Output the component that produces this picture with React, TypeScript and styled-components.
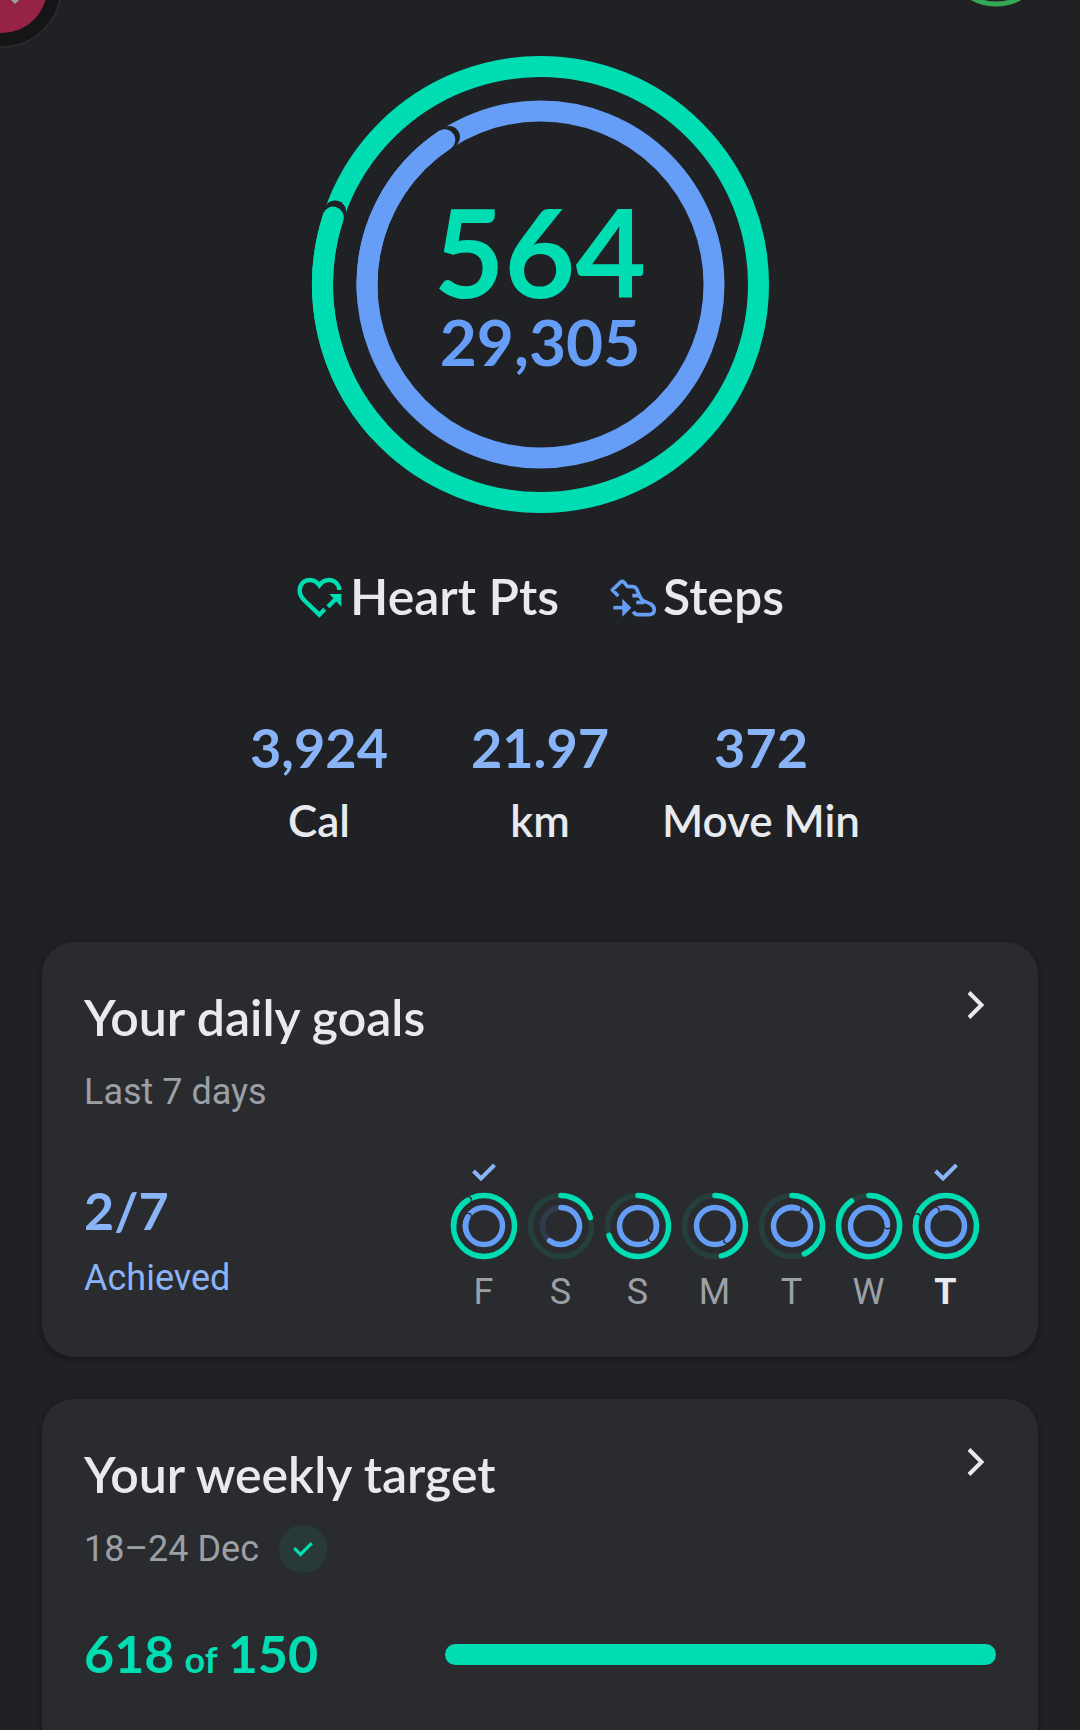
import React from "react";
import styled, { createGlobalStyle } from "styled-components";

const color = {
  page: "#202124",
  card: "#2a2b2e",
  green: "#00ddb3",
  blue: "#669df6",
  lightBlue: "#8ab4f8",
  text: "#e8eaed",
  muted: "#9aa0a6",
  greenTrack: "#25403c",
  blueTrack: "#323b4c",
  badge: "#283a38",
};

const display = `Lato, "Open Sans", sans-serif`;
const body = `Roboto, "Noto Sans", sans-serif`;

const GlobalStyle = createGlobalStyle`
  * { box-sizing: border-box; }
  body { margin: 0; background: ${color.page}; color: ${color.text}; font-family: ${body}; }
  h2, p, dl, dt, dd, ul { margin: 0; padding: 0; }
`;

const Page = styled.div`
  min-height: 100vh;
  display: flex;
  flex-direction: column;
  background: ${color.page};
`;

const TopBar = styled.header`
  display: flex;
  justify-content: space-between;
  align-items: flex-start;
  height: 56px;
  padding-right: 54px;
`;

const Icon = styled.svg`
  display: block;
  flex: none;
`;

const Summary = styled.section`
  display: flex;
  flex-direction: column;
  align-items: center;
`;

const Dial = styled.div`
  display: grid;
  place-items: center;
  > * { grid-area: 1 / 1; }
`;

const DialText = styled.div`
  display: flex;
  flex-direction: column;
  align-items: center;
  padding-top: 14px;
  font-family: ${display};
  font-weight: 700;
`;

const HeartPoints = styled.div`
  font-size: 122px;
  line-height: 100px;
  color: ${color.green};
`;

const StepCount = styled.div`
  font-size: 64px;
  line-height: 82px;
  color: ${color.blue};
`;

const Legend = styled.ul`
  display: flex;
  gap: 50px;
  margin-top: 55px;
  list-style: none;
`;

const LegendItem = styled.li`
  display: flex;
  align-items: center;
  gap: 6px;
  font: 600 50px/56px ${display};
`;

const Stats = styled.dl`
  display: grid;
  grid-template-columns: repeat(3, 221px);
  margin-top: 92px;
  text-align: center;
`;

const Stat = styled.div`
  display: flex;
  flex-direction: column-reverse;
`;

const StatLabel = styled.dt`
  font: 600 44px/80px ${display};
`;

const StatValue = styled.dd`
  font: 700 54px/64px ${display};
  color: ${color.lightBlue};
`;

const Cards = styled.main`
  flex: 1;
  display: flex;
  flex-direction: column;
  gap: 42px;
  padding: 82px 42px 0;
`;

const Card = styled.section<{ $open?: boolean }>`
  flex: ${(p) => (p.$open ? "1 0 auto" : "none")};
  padding: 46px 42px 41px;
  border-radius: ${(p) => (p.$open ? "32px 32px 0 0" : "32px")};
  background: ${color.card};
  box-shadow: 0 2px 6px rgba(0, 0, 0, 0.35);
`;

const CardHead = styled.div`
  display: flex;
  justify-content: space-between;
  align-items: flex-start;
`;

const CardTitle = styled.h2`
  font: 600 50px/58px ${display};
`;

const MoreButton = styled.button`
  display: grid;
  place-items: center;
  width: 40px;
  height: 34px;
  padding: 0;
  border: 0;
  background: none;
  color: ${color.text};
  cursor: pointer;
`;

const Subtitle = styled.p`
  display: flex;
  align-items: center;
  gap: 20px;
  margin-top: 22px;
  font-size: 36px;
  line-height: 48px;
  color: ${color.muted};
`;

const Badge = styled.span`
  display: grid;
  place-items: center;
  width: 48px;
  height: 48px;
  border-radius: 50%;
  background: ${color.badge};
`;

const CardBody = styled.div`
  display: grid;
  grid-template-columns: 361px 1fr;
  align-items: center;
  min-height: 74px;
  margin-top: 44px;
`;

const Figure = styled.p<{ $tone: string }>`
  display: flex;
  align-items: baseline;
  gap: 10px;
  padding-top: 4px;
  font: 700 52px/64px ${display};
  color: ${(p) => p.$tone};
`;

const Of = styled.span`
  font-size: 36px;
`;

const Caption = styled.p`
  margin-top: 12px;
  font-size: 36px;
  line-height: 48px;
  color: ${color.lightBlue};
`;

const Week = styled.ul`
  display: grid;
  grid-template-columns: repeat(7, 1fr);
  padding-right: 12px;
  list-style: none;
`;

const Day = styled.li`
  display: flex;
  flex-direction: column;
  align-items: center;
`;

const CheckSlot = styled.span`
  height: 32px;
`;

const DayLabel = styled.span<{ $today: boolean }>`
  margin-top: 8px;
  font-size: 36px;
  line-height: 48px;
  font-weight: ${(p) => (p.$today ? 700 : 400)};
  color: ${(p) => (p.$today ? color.text : color.muted)};
`;

const Meter = styled.progress`
  display: block;
  width: 100%;
  height: 21px;
  border: 0;
  border-radius: 11px;
  overflow: hidden;
  appearance: none;
  background: ${color.greenTrack};
  &::-webkit-progress-bar { background: ${color.greenTrack}; }
  &::-webkit-progress-value { background: ${color.green}; }
  &::-moz-progress-bar { background: ${color.green}; }
`;

/* Point on a circle, with the angle in degrees clockwise from the top. */
const point = (c: number, r: number, deg: number) => {
  const a = (deg * Math.PI) / 180;
  return [c + r * Math.sin(a), c - r * Math.cos(a)];
};

const arc = (c: number, r: number, from: number, to: number) => {
  const [x1, y1] = point(c, r, from);
  const [x2, y2] = point(c, r, to);
  return `M${x1} ${y1}A${r} ${r} 0 ${to - from > 180 ? 1 : 0} 1 ${x2} ${y2}`;
};

type RingProps = {
  c: number;
  r: number;
  width: number;
  end: number;
  lapped?: boolean;
  tone: string;
  track: string;
  ground: string;
  gap: number;
};

/* A goal ring. Once lapped, the whole circle is filled and the end overlaps its start. */
function Ring({ c, r, width, end, lapped, tone, track, ground, gap }: RingProps) {
  if (!lapped) {
    return (
      <g fill="none" strokeWidth={width}>
        <circle cx={c} cy={c} r={r} stroke={track} />
        <path d={arc(c, r, 0, end)} stroke={tone} strokeLinecap="round" />
      </g>
    );
  }
  const [gx, gy] = point(c, r, end + (gap / r) * 57.3);
  return (
    <g fill="none">
      <circle cx={c} cy={c} r={r} stroke={tone} strokeWidth={width} />
      <circle cx={gx} cy={gy} r={width / 2 + 0.5} fill={ground} />
      <path d={arc(c, r, end - 60, end)} stroke={tone} strokeWidth={width} strokeLinecap="round" />
    </g>
  );
}

function Check({ size, tone }: { size: number; tone: string }) {
  return (
    <Icon width={size} height={size} viewBox="0 0 24 24" fill="none" stroke={tone} strokeWidth="4">
      <path d="M1.500 11 9 18.500 22.500 5" />
    </Icon>
  );
}

function HeartIcon() {
  return (
    <Icon width="48" height="44" viewBox="47 43 144 132" fill="none" stroke={color.green} strokeWidth="13">
      <path d="M133 149 117 165 74 124C62 112 58 104 58 93 58 75 71 61 88 61 100 61 110 67 117 77 124 67 134 61 146 61 163 61 177 75 177 91" />
      <path d="M143 141 170 114" />
      <path d="M147 103H183V141Z" fill={color.green} stroke="none" />
    </Icon>
  );
}

function ShoeIcon() {
  return (
    <Icon width="48" height="44" viewBox="992 43 144 132" fill="none" stroke={color.blue} strokeWidth="11" strokeLinejoin="round">
      <path d="M1020 109 1002 91 1026 68Q1032 62 1038 69L1047 80 1064 81Q1072 82 1075 88L1082 105Q1087 118 1094 123L1115 132Q1128 139 1128 150 1127 165 1112 165H1078Q1070 165 1065 156" />
      <path d="M1062 108H1082M1074 128H1098" />
      <path d="M1005 144H1036" />
      <path d="M1032 117V171L1059 144Z" fill={color.blue} stroke="none" />
    </Icon>
  );
}

function Chevron() {
  return (
    <Icon width="20" height="30" viewBox="0 0 20 30" fill="none" stroke="currentColor" strokeWidth="4">
      <path d="M3 2.500 15.500 15 3 27.500" />
    </Icon>
  );
}

type DayGoal = { name: string; pts: number; ptsLapped?: boolean; steps: number; stepsLapped?: boolean; done?: boolean };

const week: DayGoal[] = [
  { name: "F", pts: 328, ptsLapped: true, steps: 300, stepsLapped: true, done: true },
  { name: "S", pts: 74, steps: 218 },
  { name: "S", pts: 252, steps: 132, stepsLapped: true },
  { name: "M", pts: 168, steps: 139, stepsLapped: true },
  { name: "T", pts: 156, steps: 18, stepsLapped: true },
  { name: "W", pts: 325, steps: 88, stepsLapped: true },
  { name: "T", pts: 287, ptsLapped: true, steps: 326, stepsLapped: true, done: true },
];

const stats = [
  { value: "3,924", label: "Cal" },
  { value: "21.97", label: "km" },
  { value: "372", label: "Move Min" },
];

export default function App() {
  return (
    <Page>
      <GlobalStyle />
      <TopBar>
        <Icon width="64" height="52" viewBox="0 0 64 52">
          <circle cx="2" cy="-12" r="59" fill="#151517" stroke="#29292b" strokeWidth="2" />
          <circle cx="2" cy="-12" r="45" fill="#962246" />
          <path d="M11 0H19L15 4Z" fill="#9aa0a6" />
        </Icon>
        <Icon width="60" height="8" viewBox="0 0 60 8">
          <circle cx="30" cy="-45" r="49" fill="none" stroke="#34a853" strokeWidth="5" />
        </Icon>
      </TopBar>

      <Summary>
        <Dial>
          <Icon width="458" height="457" viewBox="-1 0 458 457">
            <Ring c={228.500} r={218} width={21} end={288} lapped tone={color.green} track={color.greenTrack} ground={color.page} gap={6} />
            <Ring c={228.500} r={173.500} width={21} end={326.500} lapped tone={color.blue} track={color.blueTrack} ground={color.page} gap={5} />
          </Icon>
          <DialText>
            <HeartPoints>564</HeartPoints>
            <StepCount>29,305</StepCount>
          </DialText>
        </Dial>
        <Legend>
          <LegendItem><HeartIcon />Heart Pts</LegendItem>
          <LegendItem><ShoeIcon />Steps</LegendItem>
        </Legend>
        <Stats>
          {stats.map((s) => (
            <Stat key={s.label}>
              <StatLabel>{s.label}</StatLabel>
              <StatValue>{s.value}</StatValue>
            </Stat>
          ))}
        </Stats>
      </Summary>

      <Cards>
        <Card>
          <CardHead>
            <CardTitle>Your daily goals</CardTitle>
            <MoreButton aria-label="Open daily goals"><Chevron /></MoreButton>
          </CardHead>
          <Subtitle>Last 7 days</Subtitle>
          <CardBody>
            <div>
              <Figure $tone={color.lightBlue}>2/7</Figure>
              <Caption>Achieved</Caption>
            </div>
            <Week>
              {week.map((d, i) => (
                <Day key={i}>
                  <CheckSlot>{d.done && <Check size={24} tone={color.lightBlue} />}</CheckSlot>
                  <Icon width="68" height="68" viewBox="0 0 68 68">
                    <Ring c={34} r={30.500} width={5.500} end={d.pts} lapped={d.ptsLapped} tone={color.green} track={color.greenTrack} ground={color.card} gap={1} />
                    <Ring c={34} r={18.500} width={5.500} end={d.steps} lapped={d.stepsLapped} tone={color.blue} track={color.blueTrack} ground={color.card} gap={1} />
                  </Icon>
                  <DayLabel $today={i === week.length - 1}>{d.name}</DayLabel>
                </Day>
              ))}
            </Week>
          </CardBody>
        </Card>

        <Card $open>
          <CardHead>
            <CardTitle>Your weekly target</CardTitle>
            <MoreButton aria-label="Open weekly target"><Chevron /></MoreButton>
          </CardHead>
          <Subtitle>
            18–24 Dec
            <Badge><Check size={20} tone={color.green} /></Badge>
          </Subtitle>
          <CardBody>
            <Figure $tone={color.green}>618 <Of>of</Of> 150</Figure>
            <Meter aria-label="Weekly heart points" max={150} value={150} />
          </CardBody>
        </Card>
      </Cards>
    </Page>
  );
}
